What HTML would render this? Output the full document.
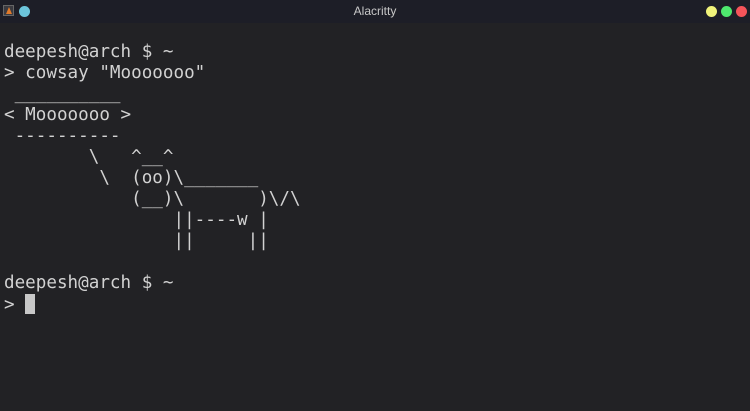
<!DOCTYPE html>
<html><head><meta charset="utf-8"><style>
html,body{margin:0;padding:0;width:750px;height:411px;overflow:hidden;background:#222225;}
.bar{position:absolute;left:0;top:0;width:750px;height:23px;background:#1d1e27;}
.title{position:absolute;left:0;width:750px;top:4px;text-align:center;color:#c8c8c8;font:12px "Liberation Sans",sans-serif;}
.dot{position:absolute;top:6px;width:11px;height:11px;border-radius:50%;}
pre{position:absolute;left:4px;top:42px;margin:0;font:17.6px/21px "DejaVu Sans Mono","Liberation Mono",monospace;color:#d2d2d2;}
.cur{display:inline-block;width:10px;height:20px;background:#c8c8c8;vertical-align:-4px;}
</style></head><body>
<div class="bar"></div>
<div style="position:absolute;left:3px;top:5px;width:11px;height:11px;background:#3a3a40;border:1px solid #666;box-sizing:border-box"><div style="position:absolute;left:2px;top:1px;width:0;height:0;border-left:3px solid transparent;border-right:3px solid transparent;border-bottom:7px solid #e07a2a"></div></div>
<div class="dot" style="left:19px;background:#6cc5db"></div>
<div class="title">Alacritty</div>
<div class="dot" style="left:706px;background:#f0f37a"></div>
<div class="dot" style="left:721px;background:#4ee86e"></div>
<div class="dot" style="left:736px;background:#f5545a"></div>
<pre>deepesh@arch $ ~
&gt; cowsay "Mooooooo"
 __________
&lt; Mooooooo &gt;
 ----------
        \   ^__^
         \  (oo)\_______
            (__)\       )\/\
                ||----w |
                ||     ||

deepesh@arch $ ~
&gt; <span class="cur"></span></pre>
</body></html>
